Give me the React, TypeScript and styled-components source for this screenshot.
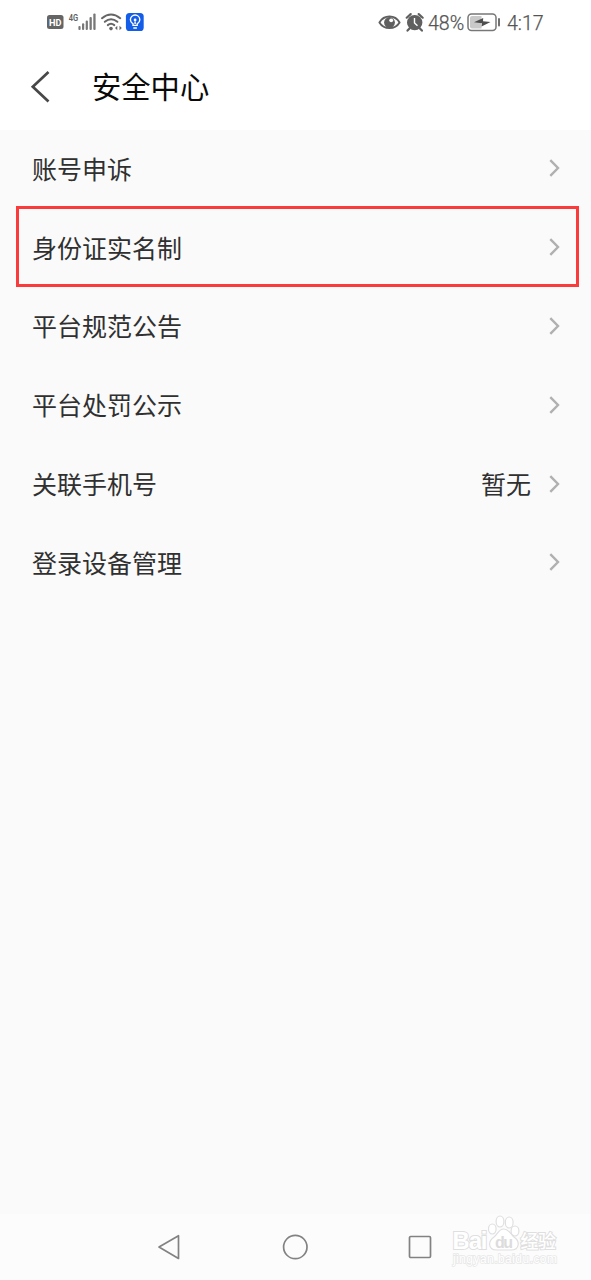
import React from "react";
import styled, { createGlobalStyle } from "styled-components";

const GlobalStyle = createGlobalStyle`
  * { box-sizing: border-box; }
  body {
    margin: 0;
    background: #fafafa;
    font-family: "Noto Sans CJK SC", sans-serif;
  }
`;

const Screen = styled.div`
  position: relative;
  display: flex;
  flex-direction: column;
  width: 591px;
  height: 1280px;
  overflow: hidden;
  background: #fafafa;
`;

const StatusBar = styled.div`
  display: flex;
  flex: none;
  justify-content: space-between;
  height: 45px;
  padding: 0 47px 0 46px;
  background: #fff;
`;

const StatusGroup = styled.div`
  display: flex;
  align-items: center;
  height: 45px;
  padding-bottom: 1px;
`;

const StatusText = styled.span<{ $width: number; $gap: number }>`
  width: ${(p) => p.$width}px;
  margin-right: ${(p) => p.$gap}px;
  padding-top: 4px;
  font-family: Roboto, sans-serif;
  font-size: 19.6px;
  font-weight: 300;
  line-height: 24px;
  white-space: nowrap;
  color: #555;
  -webkit-text-stroke: 0.25px #555;
`;

const Header = styled.header`
  display: flex;
  flex: none;
  align-items: center;
  height: 85px;
  padding: 0 30px 2px;
  background: #fff;
`;

const BackIcon = styled.svg`
  width: 22px;
  height: 34px;
  margin-right: 40px;
`;

const Title = styled.h1`
  margin: 0;
  padding-bottom: 4px;
  font-size: 29.3px;
  font-weight: 400;
  line-height: 44px;
  color: #0a0a0a;
`;

const List = styled.main`
  display: flex;
  flex: 1;
  flex-direction: column;
  margin-top: -1px;
`;

const Row = styled.div`
  position: relative;
  display: flex;
  flex: none;
  align-items: center;
  height: 78.8px;
  padding: 0 30px 0 32px;
  font-size: 25px;
  line-height: 36px;
  color: #303030;
`;

const Label = styled.span`
  flex: 1;
  padding-bottom: 1px;
`;

const Value = styled.span`
  margin-right: 17px;
  padding-bottom: 1px;
`;

const Highlight = styled.div`
  position: absolute;
  top: -2px;
  left: 16px;
  width: 563px;
  height: 81px;
  border: 3px solid #fb3a3b;
`;

const NavBar = styled.nav`
  display: flex;
  flex: none;
  align-items: center;
  justify-content: space-between;
  height: 66px;
  padding: 0 159px 0 157px;
  background: #fcfcfc;
`;

const Watermark = styled.div`
  position: absolute;
  top: 1213px;
  left: 450px;
`;

const Chevron = () => (
  <svg width="13" height="20" viewBox="0 0 13 20" fill="none" stroke="#b0b0b0" strokeWidth="2.4">
    <path d="M2.300 2.200 10 10 2.300 17.800" />
  </svg>
);

const SignalIcons = () => (
  <svg width="98" height="24" viewBox="0 0 98 24">
    <rect x="1" y="5" width="16.500" height="14" rx="2.500" fill="#656565" />
    <text x="9.200" y="15.800" fontFamily="Roboto, sans-serif" fontSize="9.200" fontWeight="700" fill="#fff" textAnchor="middle">HD</text>
    <text x="22.700" y="10.600" fontFamily="Roboto, sans-serif" fontSize="8.800" fontWeight="600" fill="#606060" textLength="9.400" lengthAdjust="spacingAndGlyphs">4G</text>
    <g fill="#777">
      <rect x="32.400" y="16" width="2.200" height="4" rx="1" />
      <rect x="36" y="13.300" width="2.200" height="6.700" rx="1" />
      <rect x="39.700" y="10.500" width="2.200" height="9.500" rx="1" />
      <rect x="43.500" y="7" width="2.300" height="13" rx="1" />
      <rect x="47.300" y="3.500" width="2.300" height="16.500" rx="1" />
    </g>
    <g fill="none" stroke="#666" strokeWidth="2" strokeLinecap="round">
      <path d="M56 8.200Q65 .8 74.200 8.200" />
      <path d="M58.800 11.800Q65 6.600 71.400 11.800" />
      <path d="M61.800 15.100Q65 12.500 68.300 15.100" />
    </g>
    <circle cx="65" cy="18.600" r="1.800" fill="#666" />
    <path d="m69 18 2.300-2.300v4.600zM75.800 18l-2.300-2.300v4.600z" fill="#666" />
    <rect x="79.900" y="3" width="17.800" height="18" rx="3.600" fill="#145de8" />
    <g fill="none" stroke="#fff" strokeWidth="1.400">
      <path d="M87 15.400v-1.600c-1.700-1-2.600-2.400-2.600-4.100a4.700 4.700 0 0 1 9.400 0c0 1.700-.9 3.100-2.600 4.100v1.600z" />
      <path d="M87.300 18h3.600M89.100 14v-2.500" />
    </g>
    <circle cx="89.100" cy="10" r="1.400" fill="#fff" />
  </svg>
);

const EyeAlarmIcon = () => (
  <svg width="50" height="24" viewBox="0 0 50 24">
    <path d="M1.400 12.500C6 4.500 17 4.500 21.600 12.500 17 20 6 20 1.400 12.500z" fill="none" stroke="#606060" strokeWidth="1.900" strokeLinejoin="round" />
    <circle cx="11.500" cy="12.500" r="5.400" fill="#606060" />
    <circle cx="13.200" cy="10.300" r="1.900" fill="#fff" />
    <circle cx="36.700" cy="12.600" r="7.700" fill="#606060" />
    <path d="m28.700 7.700 4-3.600M44.700 7.700l-4-3.600M31.500 18.500l-2 2.100M41.900 18.500l2 2.100" stroke="#606060" strokeWidth="2.200" strokeLinecap="round" />
    <path d="M36.500 8v5l3 2.800" fill="none" stroke="#fff" strokeWidth="1.400" />
  </svg>
);

const BatteryIcon = styled.svg`
  width: 35px;
  height: 20px;
  margin-right: 5px;
`;

const Battery = () => (
  <BatteryIcon viewBox="0 0 35 20">
    <rect x="1" y="2" width="28" height="16.500" rx="3.500" fill="#fff" stroke="#777" strokeWidth="1.500" />
    <path d="M5 4h9.500v12.500H5a2 2 0 0 1-2-2V6a2 2 0 0 1 2-2z" fill="#c9c9c9" />
    <path d="m7 10.300 9.200-4.300-.2 3.300 7.500.7-9 4.600.5-3.400z" fill="#4d4d4d" />
    <path d="M32 7v6.500" stroke="#707070" strokeWidth="2" strokeLinecap="round" />
  </BatteryIcon>
);

const BaiduMark = () => (
  <svg width="112" height="58" viewBox="0 0 112 58">
    <g fill="#fff" stroke="#dfdfdf" strokeWidth="1.200">
      <g paintOrder="stroke" strokeWidth="2">
        <text x="2.500" y="36" fontFamily="Liberation Sans, sans-serif" fontSize="24" fontWeight="700" textLength="35">Bai</text>
        <text x="70.500" y="34.500" fontFamily="Noto Sans CJK SC, sans-serif" fontSize="18" fontWeight="500" textLength="35.500">经验</text>
      </g>
      <ellipse cx="42.300" cy="16" rx="3.800" ry="5" />
      <ellipse cx="50" cy="8.500" rx="3.900" ry="5.500" />
      <ellipse cx="59.200" cy="9.500" rx="3.900" ry="5.500" />
      <ellipse cx="65" cy="18" rx="3.900" ry="5" />
      <path d="M53.500 16c-4.500 0-6 5-9.500 8-6 4-6.500 13 3 13h14c9 0 9-9 3-13-3.500-3-5-8-10.500-8z" />
    </g>
    <text x="45" y="34.500" fill="#dcdcdc" fontFamily="Liberation Sans, sans-serif" fontSize="16" fontWeight="700" textLength="18">du</text>
    <text x="3" y="50" fill="#fff" stroke="#e7e7e7" strokeWidth="1.500" paintOrder="stroke" fontFamily="Liberation Sans, sans-serif" fontSize="12" textLength="104">jingyan.baidu.com</text>
  </svg>
);

const items: { label: string; value?: string; highlighted?: boolean }[] = [
  { label: "账号申诉" },
  { label: "身份证实名制", highlighted: true },
  { label: "平台规范公告" },
  { label: "平台处罚公示" },
  { label: "关联手机号", value: "暂无" },
  { label: "登录设备管理" },
];

export default function App() {
  return (
    <Screen>
      <GlobalStyle />
      <StatusBar>
        <StatusGroup>
          <SignalIcons />
        </StatusGroup>
        <StatusGroup>
          <EyeAlarmIcon />
          <StatusText $width={36} $gap={3}>48%</StatusText>
          <Battery />
          <StatusText $width={37} $gap={0}>4:17</StatusText>
        </StatusGroup>
      </StatusBar>
      <Header>
        <BackIcon viewBox="0 0 22 34" fill="none" stroke="#484848" strokeWidth="2.700">
          <path d="M18.500 2 2.800 16.700 18.500 31.500" />
        </BackIcon>
        <Title>安全中心</Title>
      </Header>
      <List>
        {items.map((item) => (
          <Row key={item.label}>
            {item.highlighted && <Highlight />}
            <Label>{item.label}</Label>
            {item.value && <Value>{item.value}</Value>}
            <Chevron />
          </Row>
        ))}
      </List>
      <NavBar>
        <svg width="24" height="28" viewBox="0 0 24 28" fill="none" stroke="#828282" strokeWidth="1.700" strokeLinejoin="round">
          <path d="M2 14 21.500 2.700v22.800z" />
        </svg>
        <svg width="26" height="26" viewBox="0 0 26 26" fill="none" stroke="#828282" strokeWidth="1.700">
          <circle cx="13.300" cy="13" r="11.700" />
        </svg>
        <svg width="24" height="24" viewBox="0 0 24 24" fill="none" stroke="#828282" strokeWidth="1.700">
          <rect x="1.500" y="1.500" width="21" height="21" rx="1.200" />
        </svg>
      </NavBar>
      <Watermark>
        <BaiduMark />
      </Watermark>
    </Screen>
  );
}
